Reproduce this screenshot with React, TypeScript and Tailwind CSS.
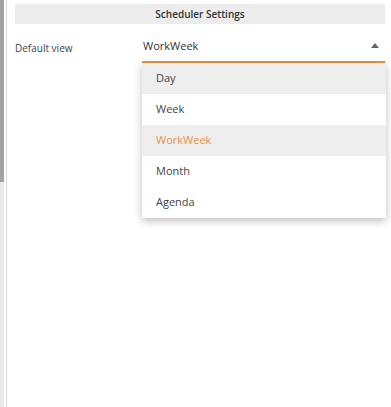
const items = ["Day", "Week", "WorkWeek", "Month", "Agenda"];

export default function App() {
  return (
    <div
      className="flex h-[407px] w-[391px] overflow-hidden bg-white text-[#333]"
      style={{ fontFamily: '"Open Sans", "Noto Sans", sans-serif' }}
    >
      <div className="flex w-[8px] shrink-0">
        <div className="flex w-[4px] flex-col">
          <div className="h-[182px] bg-[#a3a3a3]" />
          <div className="flex-1 bg-[#e8e8e8]" />
        </div>
        <div className="w-[2px]" />
        <div className="w-[1px] bg-[#d8d8d8]" />
      </div>
      <div className="flex-1 pl-[7px] pr-[6px] pt-[4px]">
        <div className="flex h-[20px] items-center justify-center bg-[#ececec] text-[10px] font-semibold text-[#333]">
          Scheduler Settings
        </div>
        <div className="mt-[8px] flex">
          <div className="w-[127px] pt-[9px] text-[10px] text-[#444]">Default view</div>
          <div className="relative flex-1">
            <div className="flex h-[31px] items-center justify-between border-b-2 border-[#e8933f] pl-[1px] pr-[6px]">
              <span className="text-[11px] text-[#333]">WorkWeek</span>
              <svg width="8" height="5" viewBox="0 0 8 5" className="mb-[2px]">
                <path d="M0 5 L4 0 L8 5 Z" fill="#666" />
              </svg>
            </div>
            <div className="absolute left-0 right-[-1px] top-[31px] z-10 bg-white shadow-[0_3px_8px_rgba(0,0,0,0.25)]">
              {items.map((it) => (
                <div
                  key={it}
                  className={
                    "flex h-[31px] items-center pl-[14px] text-[11px] " +
                    (it === "Day" || it === "WorkWeek" ? "bg-[#eeeeee] " : "") +
                    (it === "WorkWeek" ? "text-[#e8933f]" : "text-[#444]")
                  }
                >
                  {it}
                </div>
              ))}
            </div>
          </div>
        </div>
      </div>
    </div>
  );
}
